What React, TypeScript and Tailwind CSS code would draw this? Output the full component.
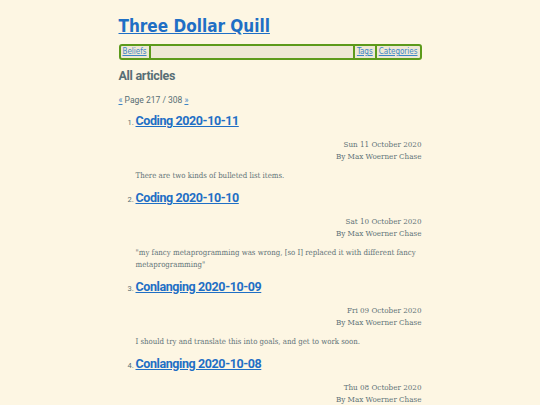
import React from 'react';

const articles = [
  {
    title: 'Coding 2020-10-11',
    date: 'Sun 11 October 2020',
    summary: 'There are two kinds of bulleted list items.',
  },
  {
    title: 'Coding 2020-10-10',
    date: 'Sat 10 October 2020',
    summary: '"my fancy metaprogramming was wrong, [so I] replaced it with different fancy metaprogramming"',
  },
  {
    title: 'Conlanging 2020-10-09',
    date: 'Fri 09 October 2020',
    summary: 'I should try and translate this into goals, and get to work soon.',
  },
  {
    title: 'Conlanging 2020-10-08',
    date: 'Thu 08 October 2020',
    summary: '',
  },
];

const wide = "font-['DejaVu_Sans_Condensed',sans-serif]";
const narrow = "font-['Roboto',sans-serif]";
const body = "font-['DejaVu_Serif_Condensed',serif]";

export default function App() {
  return (
    <div className="h-[405px] overflow-hidden bg-[#fdf6e3] text-[#586e75]">
      <div className="mx-auto w-[303px] pt-[14px]">
        <h1 className={`${wide} text-[17px] font-bold leading-[24px]`}>
          <a href="#" className="text-[#1f6fc5] underline">Three Dollar Quill</a>
        </h1>
        <nav className={`${wide} mt-[6px] flex h-[16px] items-center rounded-[3px] border-2 border-[#5c9a1b] bg-[#eee8d5] text-[8px]`}>
          <a href="#" className="border-r-2 border-[#5c9a1b] px-[2px] text-[#3d85c6] underline">Beliefs</a>
          <div className="flex-1" />
          <a href="#" className="border-l-2 border-[#5c9a1b] px-[2px] text-[#3d85c6] underline">Tags</a>
          <a href="#" className="border-l-2 border-[#5c9a1b] px-[2px] text-[#3d85c6] underline">Categories</a>
        </nav>
        <h2 className={`${narrow} mt-[8px] text-[12.5px] font-bold leading-[16px] tracking-[-0.3px] text-[#586e75]`}>All articles</h2>
        <p className={`${narrow} mt-[10px] text-[8.5px] leading-[12px]`}>
          <a href="#" className="text-[#3d85c6] underline">«</a> Page 217 / 308{' '}
          <a href="#" className="text-[#3d85c6] underline">»</a>
        </p>
        <ol className="mt-[6px] pl-[17px]">
          {articles.map((a, i) => (
            <li key={a.title} className="mb-[7px]">
              <div className="flex items-baseline">
                <span className={`${narrow} -ml-[8px] w-[8px] text-[7.5px] text-[#586e75]`}>{i + 1}.</span>
                <a href="#" className={`${narrow} text-[12.5px] font-bold leading-[18px] tracking-[-0.4px] text-[#1f6fc5] underline`}>
                  {a.title}
                </a>
              </div>
              <div className={`${body} mt-[9px] text-right text-[8px] leading-[12px] text-[#5f7378]`}>
                <div>{a.date}</div>
                <div>By Max Woerner Chase</div>
              </div>
              {a.summary && (
                <p className={`${body} mt-[7px] pr-[4px] text-[7.8px] leading-[12px] text-[#5f7378]`}>{a.summary}</p>
              )}
            </li>
          ))}
        </ol>
      </div>
    </div>
  );
}
